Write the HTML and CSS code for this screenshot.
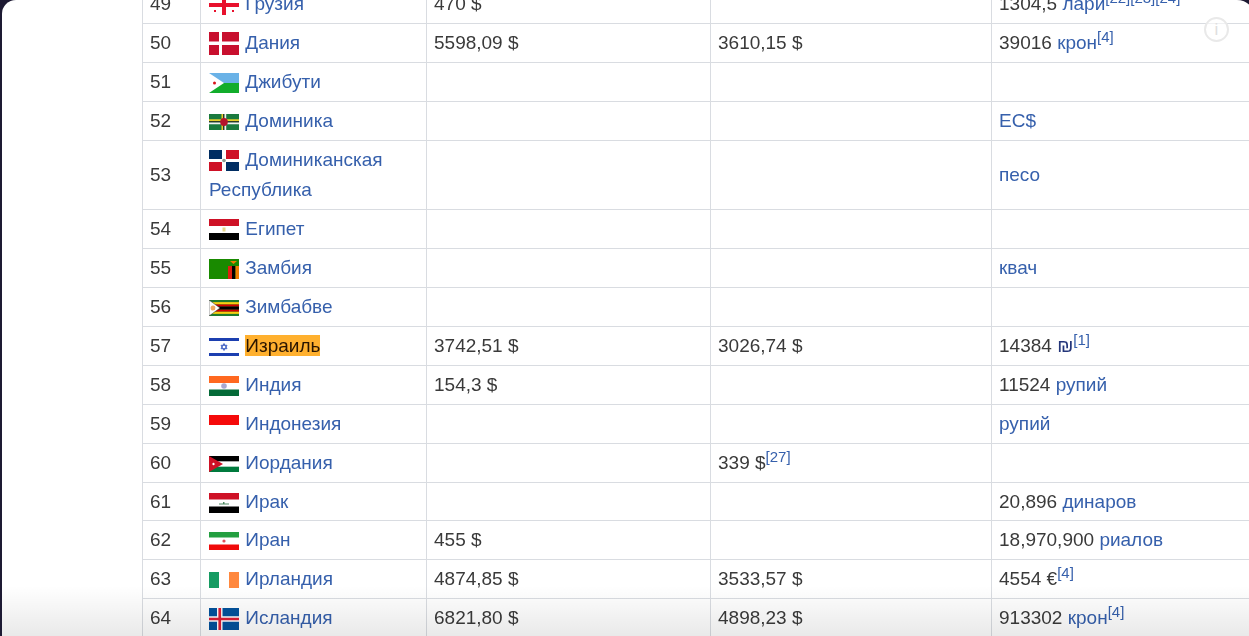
FILE: index.html
```html
<!DOCTYPE html>
<html lang="ru">
<head>
<meta charset="utf-8">
<title>Таблица</title>
<link rel="stylesheet" href="styles.css">
</head>
<body>
<main class="page">
<table class="data">
<colgroup><col class="c1"><col class="c2"><col class="c3"><col class="c4"><col class="c5"></colgroup>
<tbody>
<tr><td>49</td><td><svg class="flag" width="30" height="20" viewBox="0 0 30 20"><rect width="30" height="20" fill="#fff"/><path d="M13 0h4v8h13v4H17v8h-4v-8H0V8h13z" fill="#e8112d"/><path d="M5 3h2v2H5zM23 3h2v2h-2zM5 15h2v2H5zM23 15h2v2h-2z" fill="#e8112d"/></svg> <a>Грузия</a></td><td>470 $</td><td></td><td>1304,5 <a>лари</a><sup>[22][23][24]</sup></td></tr>
<tr><td>50</td><td><svg class="flag" width="30" height="23" viewBox="0 0 30 23"><rect width="30" height="23" fill="#c8102e"/><path d="M10 0h3v23h-3zM0 9.500h30v3.500H0z" fill="#fff"/></svg> <a>Дания</a></td><td>5598,09 $</td><td>3610,15 $</td><td>39016 <a>крон</a><sup>[4]</sup></td></tr>
<tr><td>51</td><td><svg class="flag" width="30" height="20" viewBox="0 0 30 20"><rect width="30" height="10" fill="#6ab2e7"/><rect y="10" width="30" height="10" fill="#12ad2b"/><path d="M0 0l15 10L0 20z" fill="#fff"/><circle cx="5.500" cy="10" r="1.500" fill="#d7141a"/></svg> <a>Джибути</a></td><td></td><td></td><td></td></tr>
<tr><td>52</td><td><svg class="flag" width="30" height="16" viewBox="0 0 30 15" preserveAspectRatio="none"><rect width="30" height="15" fill="#1a7a3e"/><path d="M12.500 0h1.700v15h-1.700zM0 5h30v1.700H0z" fill="#e6cf2a"/><path d="M14.200 0h1.300v15h-1.300zM0 6.700h30V8H0z" fill="#222"/><path d="M15.500 0h1.700v15h-1.700zM0 8h30v1.700H0z" fill="#f2f2f2"/><circle cx="15" cy="7.500" r="3.800" fill="#b5152b"/></svg> <a>Доминика</a></td><td></td><td></td><td><a>EC$</a></td></tr>
<tr class="tall"><td>53</td><td><svg class="flag" width="30" height="21" viewBox="0 0 30 21"><path d="M0 0h13v9H0zM17 12h13v9H17z" fill="#002d62"/><path d="M17 0h13v9H17zM0 12h13v9H0z" fill="#ce1126"/><circle cx="15" cy="10.500" r="1.800" fill="#8d9a8f"/></svg> <a>Доминиканская Республика</a></td><td></td><td></td><td><a>песо</a></td></tr>
<tr><td>54</td><td><svg class="flag" width="30" height="21" viewBox="0 0 30 21"><rect width="30" height="7" fill="#ce1126"/><rect y="14" width="30" height="7" fill="#000"/><rect x="13.500" y="8.500" width="3" height="4" fill="#e5d58c"/></svg> <a>Египет</a></td><td></td><td></td><td></td></tr>
<tr><td>55</td><td><svg class="flag" width="30" height="20" viewBox="0 0 30 20"><rect width="30" height="20" fill="#198a00"/><rect x="19" y="7" width="4" height="13" fill="#de2010"/><rect x="23" y="7" width="3.500" height="13" fill="#000"/><rect x="26.500" y="7" width="3.500" height="13" fill="#ef7d00"/><path d="M21 2h7l-3.500 3z" fill="#ef7d00"/></svg> <a>Замбия</a></td><td></td><td></td><td><a>квач</a></td></tr>
<tr><td>56</td><td><svg class="flag" width="30" height="16" viewBox="0 0 30 15" preserveAspectRatio="none"><rect width="30" height="15" fill="#1f7a2e"/><rect y="2" width="30" height="2.200" fill="#f5cf10"/><rect y="10.800" width="30" height="2.200" fill="#f5cf10"/><rect y="4.200" width="30" height="2" fill="#d40000"/><rect y="8.800" width="30" height="2" fill="#d40000"/><rect y="6.200" width="30" height="2.600" fill="#000"/><path d="M0 0l11 7.500L0 15z" fill="#fff" stroke="#333" stroke-width=".5"/><circle cx="4" cy="7.500" r="2.400" fill="#f0a860"/></svg> <a>Зимбабве</a></td><td></td><td></td><td></td></tr>
<tr><td>57</td><td><svg class="flag" width="30" height="22" viewBox="0 0 30 22"><rect width="30" height="22" fill="#fff"/><rect y="2" width="30" height="3" fill="#1c3fb0"/><rect y="17" width="30" height="3" fill="#1c3fb0"/><path d="M15 7.500l3 5.200h-6zM15 14.500l-3-5.200h6z" fill="none" stroke="#3859c0" stroke-width=".9"/></svg> <a class="mark">Израиль</a></td><td>3742,51 $</td><td>3026,74 $</td><td>14384 <a class="shekel">₪</a><sup>[1]</sup></td></tr>
<tr><td>58</td><td><svg class="flag" width="30" height="20" viewBox="0 0 30 20"><rect width="30" height="7" fill="#ff6820"/><rect y="13.500" width="30" height="6.500" fill="#046a38"/><circle cx="15" cy="10" r="2.800" fill="#a9a9cf"/></svg> <a>Индия</a></td><td>154,3 $</td><td></td><td>11524 <a>рупий</a></td></tr>
<tr><td>59</td><td><svg class="flag" width="30" height="20" viewBox="0 0 30 20"><rect width="30" height="10" fill="#f50a0a"/></svg> <a>Индонезия</a></td><td></td><td></td><td><a>рупий</a></td></tr>
<tr><td>60</td><td><svg class="flag" width="30" height="16" viewBox="0 0 30 15" preserveAspectRatio="none"><rect width="30" height="5" fill="#000"/><rect y="10" width="30" height="5" fill="#007a3d"/><path d="M0 0l14 7.500L0 15z" fill="#ce1126"/><circle cx="4.500" cy="7.500" r="1.100" fill="#fff"/></svg> <a>Иордания</a></td><td></td><td>339 $<sup>[27]</sup></td><td></td></tr>
<tr class="short"><td>61</td><td><svg class="flag" width="30" height="20" viewBox="0 0 30 20"><rect width="30" height="6.500" fill="#ce1126"/><rect y="13.500" width="30" height="6.500" fill="#000"/><path d="M10 10.500h10v1H10zM14 9h1.500v1.500H14z" fill="#4e8a62"/></svg> <a>Ирак</a></td><td></td><td></td><td>20,896 <a>динаров</a></td></tr>
<tr><td>62</td><td><svg class="flag" width="30" height="18" viewBox="0 0 30 18"><rect width="30" height="5.500" fill="#239f40"/><rect y="12.500" width="30" height="5.500" fill="#f00a0a"/><circle cx="15" cy="9" r="1.600" fill="#e2505a"/></svg> <a>Иран</a></td><td>455 $</td><td></td><td>18,970,900 <a>риалов</a></td></tr>
<tr><td>63</td><td><svg class="flag" width="30" height="16" viewBox="0 0 30 15" preserveAspectRatio="none"><rect width="10" height="15" fill="#169b62"/><rect x="20" width="10" height="15" fill="#ff883e"/></svg> <a>Ирландия</a></td><td>4874,85 $</td><td>3533,57 $</td><td>4554 €<sup>[4]</sup></td></tr>
<tr><td>64</td><td><svg class="flag" width="30" height="22" viewBox="0 0 30 22"><rect width="30" height="22" fill="#02529c"/><path d="M8 0h5.500v22H8zM0 8.250h30v5.500H0z" fill="#fff"/><path d="M9.400 0h2.700v22H9.400zM0 9.650h30v2.700H0z" fill="#dc1e35"/></svg> <a>Исландия</a></td><td>6821,80 $</td><td>4898,23 $</td><td>913302 <a>крон</a><sup>[4]</sup></td></tr>
</tbody>
</table>
<div class="info" aria-label="Информация">i</div>
<div class="fade"></div>
</main>
</body>
</html>
```
FILE: styles.css
```css
html, body {
  margin: 0;
  height: 100%;
  overflow: hidden;
  background: #1d1a33;
}

.page {
  position: relative;
  box-sizing: border-box;
  height: 636px;
  margin-left: 2px;
  margin-right: -6px;
  padding-left: 140px;
  overflow: hidden;
  background: #fff;
  border-radius: 14px 18px 0 0;
  font-family: "Liberation Sans", Arial, sans-serif;
  font-size: 19px;
  color: #3a3a3a;
}

.data {
  table-layout: fixed;
  width: 1150px;
  margin-top: -16px;
  border-collapse: collapse;
  filter: blur(0.4px);
}

.c1 { width: 58px; }
.c2 { width: 226px; }
.c3 { width: 284px; }
.c4 { width: 281px; }
.c5 { width: 301px; }

.data td {
  padding: 4px 8px 4px 7px;
  border: 1px solid #d9dce1;
  line-height: 30px;
  vertical-align: middle;
  white-space: normal;
}

.data td:nth-child(2) { padding-left: 8px; }

.data .short td { padding-bottom: 3px; }

.data a { color: #3660ac; }

.data a.mark {
  background: #ffb02e;
  color: #2a1500;
}

.data a.shekel { color: #24367a; }

.flag {
  vertical-align: middle;
  margin-right: 1px;
}

sup {
  font-size: 15px;
  line-height: 0;
  color: #3660ac;
}

.info {
  position: absolute;
  top: 17px;
  left: 1202px;
  box-sizing: border-box;
  width: 25px;
  height: 25px;
  border: 2px solid #e9e9e9;
  border-radius: 50%;
  background: rgba(255, 255, 255, 0.6);
  color: #dedede;
  font-size: 17px;
  line-height: 21px;
  text-align: center;
}

.fade {
  position: absolute;
  left: 0;
  right: 0;
  bottom: 0;
  height: 50px;
  background: linear-gradient(to bottom, rgba(0, 0, 0, 0), rgba(0, 0, 0, 0.085));
  pointer-events: none;
}
```
